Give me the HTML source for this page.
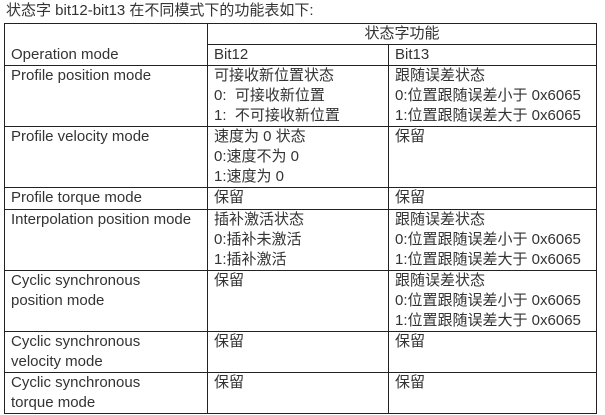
<!DOCTYPE html>
<html><head><meta charset="utf-8"><style>
html,body{margin:0;padding:0;background:#fff;width:605px;height:415px;overflow:hidden}
body{font-family:"Liberation Sans","Noto Sans CJK SC",sans-serif;font-size:15px;color:#333;position:relative}
.t{position:absolute;left:6px;top:1px;line-height:20px;white-space:nowrap}
table{position:absolute;left:4px;top:23px;border-collapse:collapse;table-layout:fixed}
td{border:1px solid #222;padding:0 0 0 6px;vertical-align:top;line-height:20px;white-space:nowrap;overflow:hidden}
</style></head><body>
<div class="t">状态字 bit12-bit13 在不同模式下的功能表如下:</div>
<table>
<colgroup><col style="width:203px"><col style="width:181px"><col style="width:208px"></colgroup>
<tr style="height:19px"><td rowspan="2" style="vertical-align:bottom">Operation mode</td><td colspan="2" style="text-align:center;padding:0">状态字功能</td></tr>
<tr style="height:19px"><td>Bit12</td><td>Bit13</td></tr>
<tr style="height:59px"><td>Profile position mode</td><td>可接收新位置状态<br>0:&nbsp; 可接收新位置<br>1:&nbsp; 不可接收新位置</td><td>跟随误差状态<br>0:位置跟随误差小于 0x6065<br>1:位置跟随误差大于 0x6065</td></tr>
<tr style="height:61px"><td>Profile velocity mode</td><td>速度为 0 状态<br>0:速度不为 0<br>1:速度为 0</td><td>保留</td></tr>
<tr style="height:22px"><td>Profile torque mode</td><td>保留</td><td>保留</td></tr>
<tr style="height:58px"><td>Interpolation position mode</td><td>插补激活状态<br>0:插补未激活<br>1:插补激活</td><td>跟随误差状态<br>0:位置跟随误差小于 0x6065<br>1:位置跟随误差大于 0x6065</td></tr>
<tr style="height:60px"><td>Cyclic synchronous<br>position mode</td><td>保留</td><td>跟随误差状态<br>0:位置跟随误差小于 0x6065<br>1:位置跟随误差大于 0x6065</td></tr>
<tr style="height:41px"><td>Cyclic synchronous<br>velocity mode</td><td>保留</td><td>保留</td></tr>
<tr style="height:41px"><td>Cyclic synchronous<br>torque mode</td><td>保留</td><td>保留</td></tr>
</table>
</body></html>
